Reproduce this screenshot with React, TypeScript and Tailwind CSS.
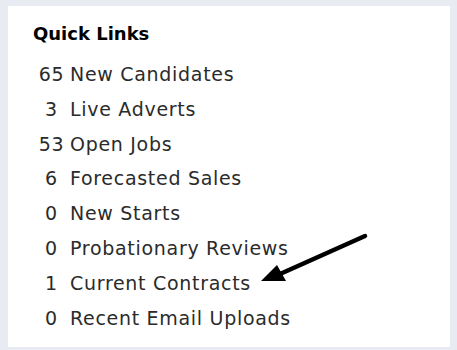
import React from "react";

const links = [
  { count: 65, label: "New Candidates" },
  { count: 3, label: "Live Adverts" },
  { count: 53, label: "Open Jobs" },
  { count: 6, label: "Forecasted Sales" },
  { count: 0, label: "New Starts" },
  { count: 0, label: "Probationary Reviews" },
  { count: 1, label: "Current Contracts" },
  { count: 0, label: "Recent Email Uploads" },
];

export default function App() {
  return (
    <div className="w-[457px] h-[350px] bg-[#e8ebf2] pl-[8px] pt-[6px] font-['DejaVu_Sans',sans-serif]">
      <div className="relative w-[442px] h-[341px] bg-white pl-[25px] pt-[16px]">
        <h2 className="text-[18px] font-bold text-black leading-[24px]">Quick Links</h2>
        <ul className="mt-[11px] text-[#2b2b2b] text-[19px] tracking-[0.7px]">
          {links.map((l) => (
            <li key={l.label} className="flex items-center h-[34.8px] leading-[34.8px]">
              <span className="w-[29px] ml-[4px] text-center">{l.count}</span>
              <span className="ml-[4px]">{l.label}</span>
            </li>
          ))}
        </ul>
        <svg className="absolute left-0 top-0" width="442" height="341" viewBox="0 0 442 341">
          <line x1="357" y1="230" x2="272" y2="268" stroke="#000" strokeWidth="4.5" strokeLinecap="round" />
          <polygon points="253,275 269,259 278,275" fill="#000" />
        </svg>
      </div>
    </div>
  );
}
